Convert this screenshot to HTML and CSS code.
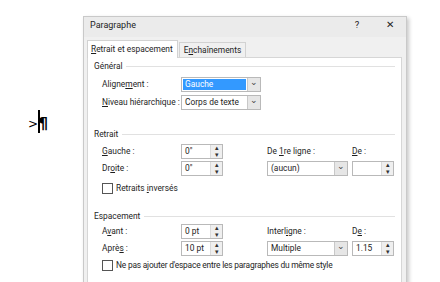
FILE: index.html
```html
<!DOCTYPE html>
<html lang="fr">
<head>
  <meta charset="UTF-8">
  <title>Paragraphe</title>
  <link rel="stylesheet" href="styles.css">
</head>
<body>
  <div class="page">
    <div class="mark"><span class="arrow">&gt;</span><span class="bar"></span><span class="pil">¶</span></div>

    <div class="dialog">
      <div class="titlebar">
        <span class="title">Paragraphe</span>
        <span class="help">?</span>
        <span class="close">✕</span>
      </div>

      <div class="tabs">
        <div class="tab active"><u>R</u>etrait et espacement</div>
        <div class="tab">E<u>n</u>chaînements</div>
      </div>

      <div class="panel">
        <!-- Général -->
        <div class="group"><span>Général</span></div>
        <div class="grid general">
          <label>Aligne<u>m</u>ent :</label>
          <div class="select"><span class="val selected">Gauche</span><span class="drop">⌄</span></div>
          <label><u>N</u>iveau hiérarchique :</label>
          <div class="select"><span class="val">Corps de texte</span><span class="drop">⌄</span></div>
        </div>

        <!-- Retrait -->
        <div class="group"><span>Retrait</span></div>
        <div class="grid four">
          <label><u>G</u>auche :</label>
          <div class="spin"><span class="val">0"</span><span class="arrows"><i>▴</i><i>▾</i></span></div>
          <label>De <u>1</u>re ligne :</label>
          <label><u>D</u>e :</label>

          <label>Dr<u>o</u>ite :</label>
          <div class="spin"><span class="val">0"</span><span class="arrows"><i>▴</i><i>▾</i></span></div>
          <div class="select"><span class="val">(aucun)</span><span class="drop">⌄</span></div>
          <div class="spin"><span class="val"></span><span class="arrows"><i>▴</i><i>▾</i></span></div>
        </div>
        <div class="check first"><span class="box"></span><span>Retraits <u>i</u>nversés</span></div>

        <!-- Espacement -->
        <div class="group"><span>Espacement</span></div>
        <div class="grid four tight">
          <label>A<u>v</u>ant :</label>
          <div class="spin"><span class="val">0 pt</span><span class="arrows"><i>▴</i><i>▾</i></span></div>
          <label>Interl<u>i</u>gne :</label>
          <label>D<u>e</u> :</label>

          <label>Aprè<u>s</u> :</label>
          <div class="spin"><span class="val">10 pt</span><span class="arrows"><i>▴</i><i>▾</i></span></div>
          <div class="select"><span class="val">Multiple</span><span class="drop">⌄</span></div>
          <div class="spin"><span class="val">1.15</span><span class="arrows"><i>▴</i><i>▾</i></span></div>
        </div>
        <div class="check"><span class="box"></span><span class="long">Ne pas ajouter d'espace entre les paragraphes du même style</span></div>
      </div>
    </div>
  </div>
</body>
</html>
```

FILE: styles.css
```css
html, body {
  margin: 0;
  background: #fff;
  overflow: hidden;
  height: 282px;
}
body {
  font-family: Roboto, "Noto Sans", sans-serif;
  font-size: 8.4px;
  color: #1e1e1e;
}
u { text-decoration: underline; text-underline-offset: 1px; }

.page {
  display: flex;
  align-items: flex-start;
  padding-top: 16px;
}

/* marque de retrait à gauche */
.mark {
  display: flex;
  align-items: center;
  margin: 94px 0 0 28px;
  width: 55px;
  height: 23px;
  font-family: "DejaVu Sans", sans-serif;
  color: #000;
}
.mark .arrow { font-size: 12px; line-height: 1; margin-top: 4px; }
.mark .bar {
  width: 2px;
  height: 23px;
  background: #000;
}
.mark .pil { font-size: 16px; font-weight: bold; line-height: 1; margin-left: -2px; margin-top: 5px; }

/* la fenêtre sort du cadre en bas, comme sur la capture */
.dialog {
  width: 322px;
  height: 266px;
  background: #f0f0f0;
  border: 1px solid #c9c9c9;
  border-bottom: none;
  box-shadow: 2px 2px 4px rgba(0,0,0,0.22);
}
.titlebar {
  display: flex;
  align-items: flex-start;
  height: 20px;
  padding: 2px 11px 0 6px;
  box-sizing: border-box;
  line-height: 12px;
  background: #ebebeb;
}
.title { flex: 1; font-size: 9px; }
.help { width: 10px; text-align: center; font-size: 9.5px; margin-right: 23px; }
.close { width: 10px; text-align: center; font-size: 10px; }

.tabs {
  display: flex;
  align-items: flex-end;
  padding: 0 4px 0 3px;
  height: 20px;
}
.tab {
  padding: 0 4px;
  height: 14px;
  line-height: 14px;
  border: 1px solid #d2d2d2;
  border-bottom: none;
  background: #f0f0f0;
  white-space: nowrap;
}
.tab.active {
  height: 17px;
  line-height: 16px;
  background: #fff;
  position: relative;
  top: 1px;
  padding: 0 4px 0 3px;
  margin-right: 1px;
}

.panel {
  margin: 0 4px 0 3px;
  height: 225px;
  background: #fff;
  border: 1px solid #d6d6d6;
  border-bottom: none;
  padding: 0 6px;
}

.group {
  display: flex;
  align-items: center;
  gap: 4px;
  height: 16px;
}
.group::after {
  content: "";
  flex: 1;
  border-top: 1px solid #e1e1e1;
}

.grid {
  display: grid;
  grid-template-columns: 79px 86px 85px 42px;
  align-items: center;
  margin-left: 8px;
}
.grid.general { grid-template-columns: 79px 80px; row-gap: 3px; margin-top: 3px; margin-bottom: 16px; }
.grid.four { row-gap: 2px; margin-top: 2px; }
.grid.four.tight { margin-top: 0; }
.grid label { height: 15px; line-height: 15px; white-space: nowrap; }

.select, .spin {
  display: flex;
  height: 15px;
  border: 1px solid #b9b9b9;
  background: #fff;
  box-sizing: border-box;
}
.grid.four .select { width: 81px; }
.grid.four .spin { width: 42px; }
.val {
  flex: 1;
  padding: 0 3px;
  line-height: 13px;
  white-space: nowrap;
  overflow: hidden;
}
.val.selected {
  background: #3399ff;
  color: #fff;
  margin: 1px;
  line-height: 11px;
  padding: 0 2px;
}
.drop {
  width: 12px;
  border-left: 1px solid #c8c8c8;
  background: #e6e6e6;
  text-align: center;
  font-size: 9px;
  line-height: 8px;
  color: #444;
}
.arrows {
  width: 11px;
  display: flex;
  flex-direction: column;
  border-left: 1px solid #dadada;
  background: #efefef;
}
.arrows i {
  flex: 1;
  font-style: normal;
  font-size: 7px;
  line-height: 6px;
  text-align: center;
  color: #333;
}

.check {
  display: flex;
  align-items: center;
  gap: 3px;
  height: 14px;
  margin: 2px 0 0 8px;
  white-space: nowrap;
}
.check.first { margin: 5px 0 13px 8px; }
.check .long { letter-spacing: -0.2px; }
.check .box {
  width: 9px;
  height: 9px;
  border: 1px solid #555;
  background: #fff;
}
```
